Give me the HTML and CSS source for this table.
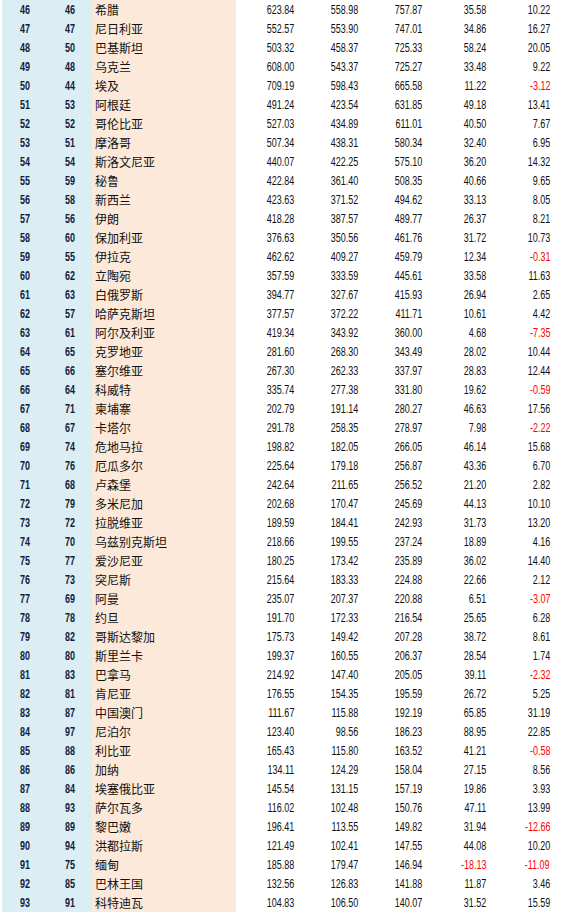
FILE: index.html
```html
<!DOCTYPE html>
<html lang="zh">
<head>
<meta charset="utf-8">
<title>排名表</title>
<link rel="stylesheet" href="styles.css">
</head>
<body>
<table class="rank-table">
<colgroup>
<col class="c-rank"><col class="c-rank"><col class="c-name">
<col class="c-num"><col class="c-num"><col class="c-num"><col class="c-num"><col class="c-num">
</colgroup>
<tbody>
<tr><td class="rk"><span>46</span></td><td class="rk"><span>46</span></td><td class="nm">希腊</td><td class="n"><span>623.84</span></td><td class="n"><span>558.98</span></td><td class="n"><span>757.87</span></td><td class="n"><span>35.58</span></td><td class="n"><span>10.22</span></td></tr>
<tr><td class="rk"><span>47</span></td><td class="rk"><span>47</span></td><td class="nm">尼日利亚</td><td class="n"><span>552.57</span></td><td class="n"><span>553.90</span></td><td class="n"><span>747.01</span></td><td class="n"><span>34.86</span></td><td class="n"><span>16.27</span></td></tr>
<tr><td class="rk"><span>48</span></td><td class="rk"><span>50</span></td><td class="nm">巴基斯坦</td><td class="n"><span>503.32</span></td><td class="n"><span>458.37</span></td><td class="n"><span>725.33</span></td><td class="n"><span>58.24</span></td><td class="n"><span>20.05</span></td></tr>
<tr><td class="rk"><span>49</span></td><td class="rk"><span>48</span></td><td class="nm">乌克兰</td><td class="n"><span>608.00</span></td><td class="n"><span>543.37</span></td><td class="n"><span>725.27</span></td><td class="n"><span>33.48</span></td><td class="n"><span>9.22</span></td></tr>
<tr><td class="rk"><span>50</span></td><td class="rk"><span>44</span></td><td class="nm">埃及</td><td class="n"><span>709.19</span></td><td class="n"><span>598.43</span></td><td class="n"><span>665.58</span></td><td class="n"><span>11.22</span></td><td class="n neg"><span>-3.12</span></td></tr>
<tr><td class="rk"><span>51</span></td><td class="rk"><span>53</span></td><td class="nm">阿根廷</td><td class="n"><span>491.24</span></td><td class="n"><span>423.54</span></td><td class="n"><span>631.85</span></td><td class="n"><span>49.18</span></td><td class="n"><span>13.41</span></td></tr>
<tr><td class="rk"><span>52</span></td><td class="rk"><span>52</span></td><td class="nm">哥伦比亚</td><td class="n"><span>527.03</span></td><td class="n"><span>434.89</span></td><td class="n"><span>611.01</span></td><td class="n"><span>40.50</span></td><td class="n"><span>7.67</span></td></tr>
<tr><td class="rk"><span>53</span></td><td class="rk"><span>51</span></td><td class="nm">摩洛哥</td><td class="n"><span>507.34</span></td><td class="n"><span>438.31</span></td><td class="n"><span>580.34</span></td><td class="n"><span>32.40</span></td><td class="n"><span>6.95</span></td></tr>
<tr><td class="rk"><span>54</span></td><td class="rk"><span>54</span></td><td class="nm">斯洛文尼亚</td><td class="n"><span>440.07</span></td><td class="n"><span>422.25</span></td><td class="n"><span>575.10</span></td><td class="n"><span>36.20</span></td><td class="n"><span>14.32</span></td></tr>
<tr><td class="rk"><span>55</span></td><td class="rk"><span>59</span></td><td class="nm">秘鲁</td><td class="n"><span>422.84</span></td><td class="n"><span>361.40</span></td><td class="n"><span>508.35</span></td><td class="n"><span>40.66</span></td><td class="n"><span>9.65</span></td></tr>
<tr><td class="rk"><span>56</span></td><td class="rk"><span>58</span></td><td class="nm">新西兰</td><td class="n"><span>423.63</span></td><td class="n"><span>371.52</span></td><td class="n"><span>494.62</span></td><td class="n"><span>33.13</span></td><td class="n"><span>8.05</span></td></tr>
<tr><td class="rk"><span>57</span></td><td class="rk"><span>56</span></td><td class="nm">伊朗</td><td class="n"><span>418.28</span></td><td class="n"><span>387.57</span></td><td class="n"><span>489.77</span></td><td class="n"><span>26.37</span></td><td class="n"><span>8.21</span></td></tr>
<tr><td class="rk"><span>58</span></td><td class="rk"><span>60</span></td><td class="nm">保加利亚</td><td class="n"><span>376.63</span></td><td class="n"><span>350.56</span></td><td class="n"><span>461.76</span></td><td class="n"><span>31.72</span></td><td class="n"><span>10.73</span></td></tr>
<tr><td class="rk"><span>59</span></td><td class="rk"><span>55</span></td><td class="nm">伊拉克</td><td class="n"><span>462.62</span></td><td class="n"><span>409.27</span></td><td class="n"><span>459.79</span></td><td class="n"><span>12.34</span></td><td class="n neg"><span>-0.31</span></td></tr>
<tr><td class="rk"><span>60</span></td><td class="rk"><span>62</span></td><td class="nm">立陶宛</td><td class="n"><span>357.59</span></td><td class="n"><span>333.59</span></td><td class="n"><span>445.61</span></td><td class="n"><span>33.58</span></td><td class="n"><span>11.63</span></td></tr>
<tr><td class="rk"><span>61</span></td><td class="rk"><span>63</span></td><td class="nm">白俄罗斯</td><td class="n"><span>394.77</span></td><td class="n"><span>327.67</span></td><td class="n"><span>415.93</span></td><td class="n"><span>26.94</span></td><td class="n"><span>2.65</span></td></tr>
<tr><td class="rk"><span>62</span></td><td class="rk"><span>57</span></td><td class="nm">哈萨克斯坦</td><td class="n"><span>377.57</span></td><td class="n"><span>372.22</span></td><td class="n"><span>411.71</span></td><td class="n"><span>10.61</span></td><td class="n"><span>4.42</span></td></tr>
<tr><td class="rk"><span>63</span></td><td class="rk"><span>61</span></td><td class="nm">阿尔及利亚</td><td class="n"><span>419.34</span></td><td class="n"><span>343.92</span></td><td class="n"><span>360.00</span></td><td class="n"><span>4.68</span></td><td class="n neg"><span>-7.35</span></td></tr>
<tr><td class="rk"><span>64</span></td><td class="rk"><span>65</span></td><td class="nm">克罗地亚</td><td class="n"><span>281.60</span></td><td class="n"><span>268.30</span></td><td class="n"><span>343.49</span></td><td class="n"><span>28.02</span></td><td class="n"><span>10.44</span></td></tr>
<tr><td class="rk"><span>65</span></td><td class="rk"><span>66</span></td><td class="nm">塞尔维亚</td><td class="n"><span>267.30</span></td><td class="n"><span>262.33</span></td><td class="n"><span>337.97</span></td><td class="n"><span>28.83</span></td><td class="n"><span>12.44</span></td></tr>
<tr><td class="rk"><span>66</span></td><td class="rk"><span>64</span></td><td class="nm">科威特</td><td class="n"><span>335.74</span></td><td class="n"><span>277.38</span></td><td class="n"><span>331.80</span></td><td class="n"><span>19.62</span></td><td class="n neg"><span>-0.59</span></td></tr>
<tr><td class="rk"><span>67</span></td><td class="rk"><span>71</span></td><td class="nm">柬埔寨</td><td class="n"><span>202.79</span></td><td class="n"><span>191.14</span></td><td class="n"><span>280.27</span></td><td class="n"><span>46.63</span></td><td class="n"><span>17.56</span></td></tr>
<tr><td class="rk"><span>68</span></td><td class="rk"><span>67</span></td><td class="nm">卡塔尔</td><td class="n"><span>291.78</span></td><td class="n"><span>258.35</span></td><td class="n"><span>278.97</span></td><td class="n"><span>7.98</span></td><td class="n neg"><span>-2.22</span></td></tr>
<tr><td class="rk"><span>69</span></td><td class="rk"><span>74</span></td><td class="nm">危地马拉</td><td class="n"><span>198.82</span></td><td class="n"><span>182.05</span></td><td class="n"><span>266.05</span></td><td class="n"><span>46.14</span></td><td class="n"><span>15.68</span></td></tr>
<tr><td class="rk"><span>70</span></td><td class="rk"><span>76</span></td><td class="nm">厄瓜多尔</td><td class="n"><span>225.64</span></td><td class="n"><span>179.18</span></td><td class="n"><span>256.87</span></td><td class="n"><span>43.36</span></td><td class="n"><span>6.70</span></td></tr>
<tr><td class="rk"><span>71</span></td><td class="rk"><span>68</span></td><td class="nm">卢森堡</td><td class="n"><span>242.64</span></td><td class="n"><span>211.65</span></td><td class="n"><span>256.52</span></td><td class="n"><span>21.20</span></td><td class="n"><span>2.82</span></td></tr>
<tr><td class="rk"><span>72</span></td><td class="rk"><span>79</span></td><td class="nm">多米尼加</td><td class="n"><span>202.68</span></td><td class="n"><span>170.47</span></td><td class="n"><span>245.69</span></td><td class="n"><span>44.13</span></td><td class="n"><span>10.10</span></td></tr>
<tr><td class="rk"><span>73</span></td><td class="rk"><span>72</span></td><td class="nm">拉脱维亚</td><td class="n"><span>189.59</span></td><td class="n"><span>184.41</span></td><td class="n"><span>242.93</span></td><td class="n"><span>31.73</span></td><td class="n"><span>13.20</span></td></tr>
<tr><td class="rk"><span>74</span></td><td class="rk"><span>70</span></td><td class="nm">乌兹别克斯坦</td><td class="n"><span>218.66</span></td><td class="n"><span>199.55</span></td><td class="n"><span>237.24</span></td><td class="n"><span>18.89</span></td><td class="n"><span>4.16</span></td></tr>
<tr><td class="rk"><span>75</span></td><td class="rk"><span>77</span></td><td class="nm">爱沙尼亚</td><td class="n"><span>180.25</span></td><td class="n"><span>173.42</span></td><td class="n"><span>235.89</span></td><td class="n"><span>36.02</span></td><td class="n"><span>14.40</span></td></tr>
<tr><td class="rk"><span>76</span></td><td class="rk"><span>73</span></td><td class="nm">突尼斯</td><td class="n"><span>215.64</span></td><td class="n"><span>183.33</span></td><td class="n"><span>224.88</span></td><td class="n"><span>22.66</span></td><td class="n"><span>2.12</span></td></tr>
<tr><td class="rk"><span>77</span></td><td class="rk"><span>69</span></td><td class="nm">阿曼</td><td class="n"><span>235.07</span></td><td class="n"><span>207.37</span></td><td class="n"><span>220.88</span></td><td class="n"><span>6.51</span></td><td class="n neg"><span>-3.07</span></td></tr>
<tr><td class="rk"><span>78</span></td><td class="rk"><span>78</span></td><td class="nm">约旦</td><td class="n"><span>191.70</span></td><td class="n"><span>172.33</span></td><td class="n"><span>216.54</span></td><td class="n"><span>25.65</span></td><td class="n"><span>6.28</span></td></tr>
<tr><td class="rk"><span>79</span></td><td class="rk"><span>82</span></td><td class="nm">哥斯达黎加</td><td class="n"><span>175.73</span></td><td class="n"><span>149.42</span></td><td class="n"><span>207.28</span></td><td class="n"><span>38.72</span></td><td class="n"><span>8.61</span></td></tr>
<tr><td class="rk"><span>80</span></td><td class="rk"><span>80</span></td><td class="nm">斯里兰卡</td><td class="n"><span>199.37</span></td><td class="n"><span>160.55</span></td><td class="n"><span>206.37</span></td><td class="n"><span>28.54</span></td><td class="n"><span>1.74</span></td></tr>
<tr><td class="rk"><span>81</span></td><td class="rk"><span>83</span></td><td class="nm">巴拿马</td><td class="n"><span>214.92</span></td><td class="n"><span>147.40</span></td><td class="n"><span>205.05</span></td><td class="n"><span>39.11</span></td><td class="n neg"><span>-2.32</span></td></tr>
<tr><td class="rk"><span>82</span></td><td class="rk"><span>81</span></td><td class="nm">肯尼亚</td><td class="n"><span>176.55</span></td><td class="n"><span>154.35</span></td><td class="n"><span>195.59</span></td><td class="n"><span>26.72</span></td><td class="n"><span>5.25</span></td></tr>
<tr><td class="rk"><span>83</span></td><td class="rk"><span>87</span></td><td class="nm">中国澳门</td><td class="n"><span>111.67</span></td><td class="n"><span>115.88</span></td><td class="n"><span>192.19</span></td><td class="n"><span>65.85</span></td><td class="n"><span>31.19</span></td></tr>
<tr><td class="rk"><span>84</span></td><td class="rk"><span>97</span></td><td class="nm">尼泊尔</td><td class="n"><span>123.40</span></td><td class="n"><span>98.56</span></td><td class="n"><span>186.23</span></td><td class="n"><span>88.95</span></td><td class="n"><span>22.85</span></td></tr>
<tr><td class="rk"><span>85</span></td><td class="rk"><span>88</span></td><td class="nm">利比亚</td><td class="n"><span>165.43</span></td><td class="n"><span>115.80</span></td><td class="n"><span>163.52</span></td><td class="n"><span>41.21</span></td><td class="n neg"><span>-0.58</span></td></tr>
<tr><td class="rk"><span>86</span></td><td class="rk"><span>86</span></td><td class="nm">加纳</td><td class="n"><span>134.11</span></td><td class="n"><span>124.29</span></td><td class="n"><span>158.04</span></td><td class="n"><span>27.15</span></td><td class="n"><span>8.56</span></td></tr>
<tr><td class="rk"><span>87</span></td><td class="rk"><span>84</span></td><td class="nm">埃塞俄比亚</td><td class="n"><span>145.54</span></td><td class="n"><span>131.15</span></td><td class="n"><span>157.19</span></td><td class="n"><span>19.86</span></td><td class="n"><span>3.93</span></td></tr>
<tr><td class="rk"><span>88</span></td><td class="rk"><span>93</span></td><td class="nm">萨尔瓦多</td><td class="n"><span>116.02</span></td><td class="n"><span>102.48</span></td><td class="n"><span>150.76</span></td><td class="n"><span>47.11</span></td><td class="n"><span>13.99</span></td></tr>
<tr><td class="rk"><span>89</span></td><td class="rk"><span>89</span></td><td class="nm">黎巴嫩</td><td class="n"><span>196.41</span></td><td class="n"><span>113.55</span></td><td class="n"><span>149.82</span></td><td class="n"><span>31.94</span></td><td class="n neg"><span>-12.66</span></td></tr>
<tr><td class="rk"><span>90</span></td><td class="rk"><span>94</span></td><td class="nm">洪都拉斯</td><td class="n"><span>121.49</span></td><td class="n"><span>102.41</span></td><td class="n"><span>147.55</span></td><td class="n"><span>44.08</span></td><td class="n"><span>10.20</span></td></tr>
<tr><td class="rk"><span>91</span></td><td class="rk"><span>75</span></td><td class="nm">缅甸</td><td class="n"><span>185.88</span></td><td class="n"><span>179.47</span></td><td class="n"><span>146.94</span></td><td class="n neg"><span>-18.13</span></td><td class="n neg"><span>-11.09</span></td></tr>
<tr><td class="rk"><span>92</span></td><td class="rk"><span>85</span></td><td class="nm">巴林王国</td><td class="n"><span>132.56</span></td><td class="n"><span>126.83</span></td><td class="n"><span>141.88</span></td><td class="n"><span>11.87</span></td><td class="n"><span>3.46</span></td></tr>
<tr><td class="rk"><span>93</span></td><td class="rk"><span>91</span></td><td class="nm">科特迪瓦</td><td class="n"><span>104.83</span></td><td class="n"><span>106.50</span></td><td class="n"><span>140.07</span></td><td class="n"><span>31.52</span></td><td class="n"><span>15.59</span></td></tr>
</tbody>
</table>
</body>
</html>
```
FILE: styles.css
```css
html, body {
  margin: 0;
  padding: 0;
  background: #ffffff;
}
body {
  padding-left: 2px;
}
.rank-table {
  border-collapse: collapse;
  table-layout: fixed;
  width: 554px;
  font-family: "Liberation Sans", Arial, "Noto Sans CJK SC", sans-serif;
  font-size: 12.5px;
  color: #111111;
}
.c-rank { width: 45px; }
.c-name { width: 144px; }
.c-num { width: 64px; }
.rank-table tr {
  height: 19px;
}
.rank-table td {
  padding: 1px 0 0 0;
  line-height: 18px;
  white-space: nowrap;
  overflow: hidden;
}
.rank-table td span {
  display: inline-block;
  transform: scaleX(0.72);
}
.rk {
  background: #daeef3;
  text-align: center;
  font-weight: bold;
  color: #141a3c;
}
.rk span {
  transform-origin: center center;
}
.nm {
  background: #fde9d9;
  padding-left: 3px !important;
  padding-top: 0 !important;
  line-height: 19px !important;
  font-family: "Noto Sans CJK SC", sans-serif;
  font-size: 12px;
  text-align: left;
}
.n {
  text-align: right;
  padding-right: 6px !important;
}
.n span {
  transform-origin: right center;
}
.neg {
  color: #ff0000;
}
```
